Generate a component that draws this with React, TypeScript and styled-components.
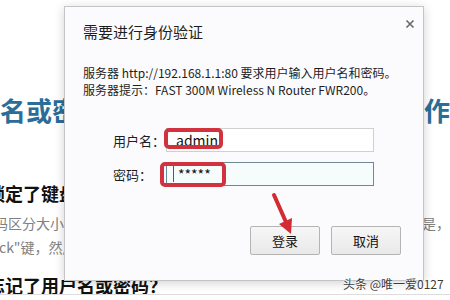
import React from 'react';
import styled, { createGlobalStyle } from 'styled-components';

const cjk = '"Noto Sans CJK SC", "Noto Sans", sans-serif';

const GlobalStyle = createGlobalStyle`
  html, body {
    margin: 0;
    padding: 0;
    background: #ffffff;
  }
  body {
    font-family: ${cjk};
  }
`;

const Page = styled.div`
  position: relative;
  width: 450px;
  height: 300px;
  overflow: hidden;
  background: #ffffff;
`;

const Article = styled.div`
  display: flex;
  flex-direction: column;
  padding-top: 96px;
`;

const Title = styled.div`
  display: flex;
  justify-content: space-between;
  font-size: 26px;
  font-weight: 700;
  line-height: 28px;
  color: #2a6d98;
  white-space: nowrap;
`;

const SubTitle = styled.div<{ top: number }>`
  margin-top: ${(p) => p.top}px;
  margin-left: -13px;
  font-size: 18px;
  font-weight: 700;
  line-height: 22px;
  color: #111111;
  white-space: nowrap;
`;

const Para = styled.div`
  margin-top: 7px;
  margin-left: -6px;
  display: flex;
  flex-direction: column;
  font-size: 14px;
  line-height: 24px;
  color: #808080;
`;

const ParaLine = styled.div<{ indent?: number }>`
  display: flex;
  justify-content: space-between;
  padding-left: ${(p) => p.indent ?? 0}px;
  white-space: nowrap;
`;

const Rule = styled.div`
  margin-top: -2px;
  height: 1px;
  background: #dcdcdc;
`;

const Watermark = styled.div`
  position: absolute;
  left: 343px;
  top: 274px;
  font-size: 12px;
  line-height: 20px;
  color: #3c3c3c;
  white-space: nowrap;
  text-shadow: 0 0 2px #ffffff, 0 0 2px #ffffff;
`;

const Dialog = styled.div`
  position: absolute;
  left: 64px;
  top: 6px;
  width: 360px;
  height: 275px;
  box-sizing: border-box;
  border: 1px solid #c4c4c4;
  background: #fbfbfd;
  box-shadow: 0 2px 10px rgba(0, 0, 0, 0.18);
  padding: 13px 22px 0 18px;
  display: flex;
  flex-direction: column;
`;

const Header = styled.div`
  display: flex;
  justify-content: space-between;
  align-items: center;
  height: 22px;
`;

const DialogTitle = styled.div`
  font-size: 15px;
  color: #1e1e1e;
  white-space: nowrap;
`;

const Close = styled.div`
  width: 10px;
  height: 10px;
  margin-top: -14px;
  margin-right: -14px;
  display: flex;
`;

const Info = styled.div`
  margin-top: 22px;
  font-size: 12px;
  line-height: 17px;
  color: #1e1e1e;
  white-space: nowrap;
`;

const Form = styled.div`
  margin-top: 30px;
  margin-left: 30px;
  display: flex;
  flex-direction: column;
  gap: 10px;
`;

const Row = styled.div`
  display: flex;
  align-items: center;
`;

const Label = styled.div`
  width: 53px;
  font-size: 13px;
  color: #1e1e1e;
  white-space: nowrap;
`;

const Field = styled.div`
  position: relative;
  display: flex;
`;

const Input = styled.div<{ focused?: boolean }>`
  width: 208px;
  height: 24px;
  box-sizing: border-box;
  border: 1px solid ${(p) => (p.focused ? '#6f8797' : '#d0d0d0')};
  background: ${(p) => (p.focused ? '#f6fbfc' : '#ffffff')};
  padding-left: 9px;
  font-size: 14px;
  line-height: 22px;
  color: #111111;
  display: flex;
  align-items: center;
`;

const Caret = styled.span`
  width: 1px;
  height: 16px;
  background: #4a5a6a;
  margin-left: -3px;
  margin-right: 4px;
`;

const Mark = styled.div<{ dx: number; dy: number; w: number; h: number }>`
  position: absolute;
  left: ${(p) => p.dx}px;
  top: ${(p) => p.dy}px;
  width: ${(p) => p.w}px;
  height: ${(p) => p.h}px;
  box-sizing: border-box;
  border: 4px solid #d1323d;
  border-radius: 5px;
  pointer-events: none;
`;

const Buttons = styled.div`
  margin-top: 40px;
  display: flex;
  justify-content: flex-end;
  gap: 11px;
`;

const Button = styled.button`
  width: 70px;
  height: 29px;
  border: 1px solid #b4b4b4;
  border-radius: 2px;
  background: linear-gradient(#f6f6f6, #e9e9e9);
  font-family: ${cjk};
  font-size: 13px;
  color: #111111;
  padding: 0;
`;

const Arrow = styled.svg`
  position: absolute;
  left: 200px;
  top: 184px;
  overflow: visible;
`;

export default function App() {
  return (
    <>
      <GlobalStyle />
      <Page>
        <Article>
          <Title>
            <span>名或密码怎么办</span>
            <span>作</span>
          </Title>
          <SubTitle top={58}>锁定了键盘大写锁定</SubTitle>
          <Para>
            <ParaLine>
              <span>码区分大小写，请检查键盘大写灯</span>
              <span>是，</span>
            </ParaLine>
            <ParaLine indent={5}>
              <span>ck"键，然后重新输入</span>
            </ParaLine>
          </Para>
          <SubTitle top={15}>忘记了用户名或密码？</SubTitle>
          <Rule />
        </Article>

        <Dialog>
          <Header>
            <DialogTitle>需要进行身份验证</DialogTitle>
            <Close>
              <svg width="10" height="10" viewBox="0 0 10 10">
                <path d="M1.5 1.5 L8.5 8.5 M8.5 1.5 L1.5 8.5" stroke="#6b6b6b" strokeWidth="1.7" />
              </svg>
            </Close>
          </Header>
          <Info>
            <div>服务器 http://192.168.1.1:80 要求用户输入用户名和密码。</div>
            <div>服务器提示：FAST 300M Wireless N Router FWR200。</div>
          </Info>
          <Form>
            <Row>
              <Label>用户名：</Label>
              <Field>
                <Input>admin</Input>
                <Mark dx={-2} dy={0} w={59} h={21} />
              </Field>
            </Row>
            <Row>
              <Label>密码：</Label>
              <Field>
                <Input focused>
                  <Caret />
                  *****
                </Input>
                <Mark dx={-6} dy={0} w={66} h={25} />
              </Field>
            </Row>
          </Form>
          <Buttons>
            <Button>登录</Button>
            <Button>取消</Button>
          </Buttons>
          <Arrow width="36" height="50" viewBox="0 0 36 50">
            <line x1="9" y1="4" x2="20.5" y2="30" stroke="#d42a33" strokeWidth="4" strokeLinecap="round" />
            <polygon points="26,43 27,27 14,33" fill="#d42a33" />
          </Arrow>
        </Dialog>

        <Watermark>头条 @唯一爱0127</Watermark>
      </Page>
    </>
  );
}
